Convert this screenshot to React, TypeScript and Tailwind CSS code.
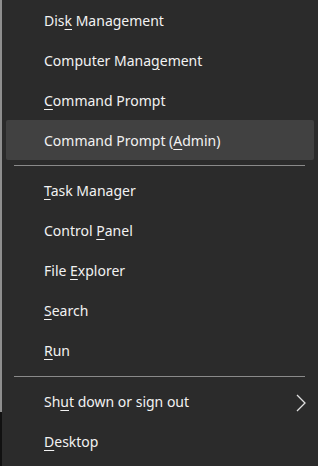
import React from 'react';

type Item = { pre: string; key: string; post: string; active?: boolean; sub?: boolean };

const groups: Item[][] = [
  [
    { pre: 'Dis', key: 'k', post: ' Management' },
    { pre: 'Computer Mana', key: 'g', post: 'ement' },
    { pre: '', key: 'C', post: 'ommand Prompt' },
    { pre: 'Command Prompt (', key: 'A', post: 'dmin)', active: true },
  ],
  [
    { pre: '', key: 'T', post: 'ask Manager' },
    { pre: 'Control ', key: 'P', post: 'anel' },
    { pre: 'File ', key: 'E', post: 'xplorer' },
    { pre: '', key: 'S', post: 'earch' },
    { pre: '', key: 'R', post: 'un' },
  ],
  [
    { pre: 'Sh', key: 'u', post: 't down or sign out', sub: true },
    { pre: '', key: 'D', post: 'esktop' },
  ],
];

function Row({ item }: { item: Item }) {
  return (
    <div
      className={
        'mx-[4px] h-[40px] flex items-center pl-[38px] pr-[8px] rounded-[2px] ' +
        (item.active ? 'bg-[#414141]' : '')
      }
    >
      <span className="flex-1 text-[14px] text-[#f2f2f2] whitespace-nowrap">
        {item.pre}
        <span className="underline underline-offset-[3px]">{item.key}</span>
        {item.post}
      </span>
      {item.sub && (
        <svg width="10" height="18" viewBox="0 0 10 18" className="mt-[3px]">
          <path d="M1 1 L9 9 L1 17" fill="none" stroke="#e0e0e0" strokeWidth="1.3" />
        </svg>
      )}
    </div>
  );
}

export default function App() {
  return (
    <div
      className="w-[318px] h-[466px] flex bg-[#2b2b2b] overflow-hidden"
      style={{ fontFamily: '"Noto Sans", "Open Sans", sans-serif' }}
    >
      <div className="w-[2px] flex flex-col">
        <div className="h-[412px] bg-[#8f8f8f]" />
        <div className="flex-1 bg-[#111]" />
      </div>
      <div className="flex-1 flex flex-col">
        {groups.map((g, gi) => (
          <div key={gi} className={gi === 2 ? 'pt-[1px]' : ''}>
            {gi > 0 && (
              <div className="h-[10px] flex items-center pl-[12px] pr-[13px]">
                <div className="h-px flex-1 bg-[#8a8a8a]" />
              </div>
            )}
            {g.map((item, i) => (
              <Row key={i} item={item} />
            ))}
          </div>
        ))}
      </div>
    </div>
  );
}
